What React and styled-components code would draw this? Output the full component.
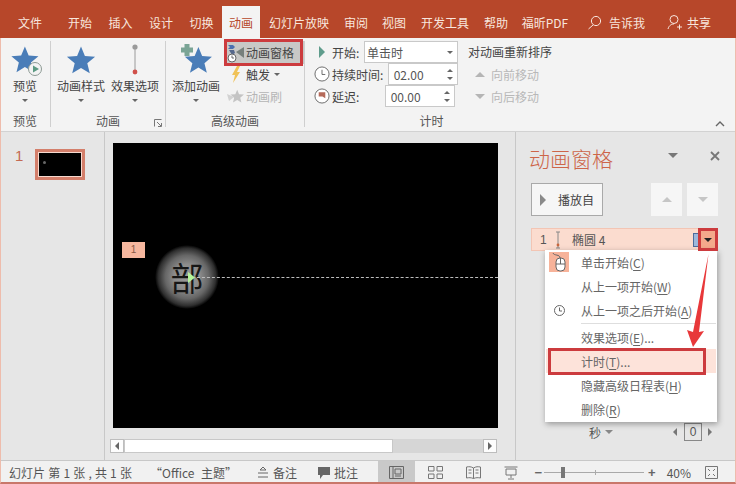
import React from "react";
import styled, { createGlobalStyle } from "styled-components";

const GlobalStyle = createGlobalStyle`
  html, body { margin: 0; padding: 0; background: #e6e6e6; }
  body { font-family: "Noto Sans CJK SC", "Noto Sans", sans-serif; color: #444; }
`;

const Window = styled.div`
  position: relative;
  width: 736px;
  height: 484px;
  overflow: hidden;
  display: flex;
  flex-direction: column;

  &::after {
    content: "";
    position: absolute;
    inset: 38px 0 0 0;
    border-left: 1px solid #eebcac;
    border-right: 1px solid #eebcac;
    border-bottom: 2px solid #c9776a;
    pointer-events: none;
    z-index: 7;
  }
`;

/* title tabs */
const TabBar = styled.div`
  height: 38px;
  flex: none;
  background: #b7472a;
  display: flex;
  align-items: flex-end;
`;
const Tab = styled.div`
  width: ${p => p.w}px;
  height: 32px;
  flex: none;
  box-sizing: border-box;
  padding-left: ${p => p.pl || 0}px;
  display: flex;
  align-items: center;
  justify-content: center;
  gap: ${p => p.gap || 4}px;
  font-size: 12px;
  color: ${p => (p.active ? "#b7472a" : "#f8e6de")};
  background: ${p => (p.active ? "#f3f3f3" : "transparent")};
  white-space: nowrap;
`;

/* ribbon */
const Ribbon = styled.div`
  height: 93px;
  flex: none;
  background: #f3f3f3;
  border-bottom: 1px solid #d2d2d2;
  display: flex;
  position: relative;
`;
const Group = styled.div`
  width: ${p => p.w}px;
  flex: none;
  box-sizing: border-box;
  margin: 3px 0 4px;
  border-right: ${p => (p.last ? "none" : "1px solid #cfcfcf")};
  display: flex;
  flex-direction: column;
  position: relative;
`;
const GroupBody = styled.div`
  flex: 1;
  display: flex;
  min-height: 0;
`;
const GroupLabel = styled.div`
  height: 20px;
  line-height: 28px;
  text-align: center;
  font-size: 12px;
  color: #555;
`;
const BigButton = styled.div`
  width: ${p => p.w}px;
  flex: none;
  display: flex;
  flex-direction: column;
  align-items: center;
  font-size: 12px;
  color: #444;
  white-space: nowrap;
`;
const BigIcon = styled.div`
  height: 36px;
  margin-top: 1px;
  display: flex;
  align-items: center;
  justify-content: center;
`;
const BigText = styled.div`
  line-height: 16px;
`;
const Caret = styled.span`
  display: inline-block;
  width: 0;
  height: 0;
  border-left: ${p => p.s || 3}px solid transparent;
  border-right: ${p => p.s || 3}px solid transparent;
  border-top: ${p => p.s || 3}px solid ${p => p.c || "#666"};
`;
const CaretSlot = styled.div`
  height: 12px;
  display: flex;
  align-items: center;
`;
const Launcher = styled.svg`
  position: absolute;
  right: 3px;
  bottom: 0;
`;
const SmallCol = styled.div`
  width: 78px;
  margin-left: 1px;
  display: flex;
  flex-direction: column;
`;
const SmallButton = styled.div`
  height: ${p => p.h || 22}px;
  display: flex;
  align-items: center;
  gap: 1px;
  font-size: 12px;
  white-space: nowrap;
  color: ${p => (p.dim ? "#b5b5b5" : "#444")};
  background: ${p => (p.on ? "#c8c8c6" : "transparent")};
`;
const IconSlot = styled.span`
  width: ${p => p.w || 18}px;
  flex: none;
  display: flex;
  align-items: center;
  justify-content: center;
`;

/* timing */
const TimingBody = styled.div`
  flex: 1;
  display: flex;
  flex-direction: column;
  padding-left: 8px;
`;
const TimingRow = styled.div`
  height: 23px;
  display: flex;
  align-items: center;
  font-size: 12px;
  color: #444;
  white-space: nowrap;
`;
const TimingLabel = styled.span`
  width: ${p => p.w}px;
  flex: none;
  margin-left: 2px;
`;
const Field = styled.div`
  width: ${p => p.w}px;
  height: 22px;
  box-sizing: border-box;
  background: #fff;
  border: 1px solid #c9c9c9;
  display: flex;
  align-items: center;
  justify-content: space-between;
  padding: 0 4px 0 2px;
  font-size: 12px;
  color: #555;
`;
const Spin = styled.div`
  display: flex;
  flex-direction: column;
  gap: 5px;
`;
const CaretUp = styled(Caret)`
  border-top: none;
  border-bottom: ${p => p.s || 3}px solid ${p => p.c || "#666"};
`;
const ReorderCol = styled.div`
  display: flex;
  flex-direction: column;
  width: 94px;
  flex: none;
`;
const ReorderTitle = styled.div`
  font-size: 12px;
  color: #444;
  height: 24px;
  line-height: 22px;
  padding-left: 4px;
  white-space: nowrap;
`;
const ReorderItem = styled.div`
  height: 22px;
  display: flex;
  align-items: center;
  gap: 6px;
  padding-left: 11px;
  font-size: 12px;
  color: #b8b8b8;
`;
const Collapse = styled.svg`
  position: absolute;
  right: 11px;
  bottom: 4px;
`;

/* main */
const Main = styled.div`
  flex: 1;
  min-height: 0;
  display: flex;
  background: #e6e6e6;
  border-bottom: 1px solid #c8c8c8;
`;
const ThumbPane = styled.div`
  width: 105px;
  flex: none;
  box-sizing: border-box;
  border-right: 1px solid #c8c8c8;
  display: flex;
  align-items: flex-start;
  padding: 17px 0 0 15px;
  gap: 12px;
`;
const ThumbNum = styled.div`
  font-family: "Liberation Sans", sans-serif;
  font-size: 15px;
  line-height: 14px;
  color: #c46a52;
`;
const Thumb = styled.div`
  width: 50px;
  height: 31px;
  box-sizing: border-box;
  background: #000;
  border: 3px solid #d47f6b;
  outline: 1px solid #f6d9cf;
  outline-offset: -4px;
  position: relative;
`;
const ThumbDot = styled.span`
  position: absolute;
  left: 5px;
  top: 9px;
  width: 3px;
  height: 3px;
  border-radius: 50%;
  background: #666;
`;
const Stage = styled.div`
  width: 411px;
  flex: none;
  box-sizing: border-box;
  border-right: 1px solid #c8c8c8;
  padding: 11px 0 0 8px;
  display: flex;
  flex-direction: column;
`;
const Slide = styled.div`
  width: 385px;
  height: 285px;
  background: #000;
  position: relative;
  flex: none;
`;
const Tag = styled.div`
  position: absolute;
  left: 9px;
  top: 99px;
  width: 23px;
  height: 16px;
  background: #f6b79f;
  color: #8a5a48;
  font-family: "Liberation Sans", sans-serif;
  font-size: 10px;
  line-height: 16px;
  text-align: center;
`;
const Glow = styled.div`
  position: absolute;
  left: 42px;
  top: 102px;
  width: 64px;
  height: 64px;
  border-radius: 50%;
  background: radial-gradient(circle closest-side, #9a9a9a 0%, #8c8c8c 40%, #666 68%, #2e2e2e 90%, #000 100%);
  display: flex;
  align-items: center;
  justify-content: center;
  font-size: 33px;
  color: #161616;
`;
const PathLine = styled.div`
  position: absolute;
  left: 84px;
  right: 0;
  top: 134px;
  border-top: 1px dashed #bdbdbd;
`;
const PathHead = styled.svg`
  position: absolute;
  left: 74px;
  top: 128px;
`;
const HScroll = styled.div`
  margin-top: 11px;
  margin-left: -3px;
  width: 387px;
  height: 14px;
  display: flex;
  background: #d6d6d6;
`;
const ScrollBtn = styled.div`
  width: 14px;
  flex: none;
  box-sizing: border-box;
  background: #fdfdfd;
  border: 1px solid #bdbdbd;
  display: flex;
  align-items: center;
  justify-content: center;
`;
const ScrollThumb = styled.div`
  width: 269px;
  flex: none;
  background: #fff;
  border: 1px solid #c8c8c8;
  box-sizing: border-box;
`;
const ScrollTrack = styled.div`
  flex: 1;
`;
const ArrowLeft = styled.span`
  width: 0;
  height: 0;
  border-top: 4px solid transparent;
  border-bottom: 4px solid transparent;
  border-right: 4px solid ${p => p.c || "#666"};
`;
const ArrowRight = styled.span`
  width: 0;
  height: 0;
  border-top: ${p => p.s || 4}px solid transparent;
  border-bottom: ${p => p.s || 4}px solid transparent;
  border-left: ${p => p.s || 4}px solid ${p => p.c || "#666"};
`;

/* animation pane */
const Pane = styled.div`
  flex: 1;
  position: relative;
  padding: 0 18px 0 15px;
  display: flex;
  flex-direction: column;
`;
const PaneHead = styled.div`
  height: 51px;
  display: flex;
  align-items: center;
  margin-left: -2px;
  font-size: 21px;
  color: #cd6549;
`;
const PaneTitle = styled.div`
  flex: 1;
  font-weight: 300;
`;
const PaneTools = styled.div`
  display: flex;
  align-items: center;
  gap: 32px;
  margin: -4px -2px 0 0;
`;
const PlayRow = styled.div`
  display: flex;
  height: 33px;
  align-items: stretch;
`;
const PlayButton = styled.div`
  width: 72px;
  box-sizing: border-box;
  background: #f6f6f6;
  border: 1px solid #a9a9a9;
  display: flex;
  align-items: center;
  gap: 12px;
  padding-left: 8px;
  font-size: 12px;
  color: #444;
`;
const MoveButton = styled.div`
  width: 31px;
  margin-left: ${p => p.ml || 0}px;
  background: #f6f6f6;
  display: flex;
  align-items: center;
  justify-content: center;
`;
const ListRow = styled.div`
  margin-top: 12px;
  height: 23px;
  box-sizing: border-box;
  background: #fbdccf;
  border: 1px solid #f3c5b4;
  display: flex;
  align-items: center;
  font-size: 12px;
  color: #555;
  padding-left: 8px;
  position: relative;
`;
const RowNum = styled.span`
  font-family: "Liberation Sans", sans-serif;
  font-size: 12px;
  width: 15px;
`;
const RowName = styled.span`
  margin-left: 11px;
  flex: 1;
`;
const RowBar = styled.span`
  width: 6px;
  height: 14px;
  box-sizing: border-box;
  background: #9db8dc;
  border: 1px solid #4d6c9c;
`;
const RowDrop = styled.span`
  width: 18px;
  height: 21px;
  background: #f4a98b;
  display: flex;
  align-items: center;
  justify-content: center;
`;
const Menu = styled.div`
  position: absolute;
  left: 29px;
  top: 118px;
  width: 172px;
  height: 172px;
  box-sizing: border-box;
  background: #fff;
  box-shadow: 1px 2px 6px rgba(0, 0, 0, 0.35);
  padding: 0 1px;
  display: flex;
  flex-direction: column;
  z-index: 2;
`;
const MenuItem = styled.div`
  height: 24px;
  flex: none;
  display: flex;
  align-items: center;
  padding-left: 35px;
  position: relative;
  font-size: 12px;
  color: #666;
  white-space: nowrap;
  background: ${p => (p.on ? "#fde3da" : "transparent")};
  u { text-underline-offset: 2px; }
`;
const MenuIcon = styled.span`
  position: absolute;
  left: 3px;
  top: 2px;
  width: 20px;
  height: 20px;
  display: flex;
  align-items: center;
  justify-content: center;
  background: ${p => (p.on ? "#f7b39a" : "transparent")};
`;
const MenuRule = styled.div`
  height: 1px;
  flex: none;
  margin: 1px 0 1px 35px;
  background: #dedede;
`;
const PaneFoot = styled.div`
  position: absolute;
  left: 73px;
  top: 288px;
  width: 150px;
  height: 24px;
  display: flex;
  align-items: center;
  font-size: 12px;
  color: #555;
`;
const FootUnit = styled.div`
  display: flex;
  align-items: center;
  gap: 4px;
  width: 84px;
`;
const ZeroBox = styled.div`
  width: 16px;
  height: 16px;
  margin: 0 6px 0 7px;
  border: 1px solid #888;
  font-family: "Liberation Sans", sans-serif;
  font-size: 12px;
  line-height: 16px;
  text-align: center;
`;

/* status bar */
const StatusBar = styled.div`
  height: 23px;
  flex: none;
  background: #f1f1f1;
  display: flex;
  align-items: center;
  font-size: 12px;
  color: #555;
  white-space: nowrap;
`;
const StatusText = styled.span`
  margin-left: ${p => p.ml}px;
  flex: none;
  display: flex;
  align-items: center;
  gap: ${p => p.gap || 3}px;
  white-space: pre;
  word-spacing: ${p => p.ws || 0}px;
`;
const Views = styled.div`
  margin-left: auto;
  display: flex;
  align-items: center;
  height: 100%;
  padding-right: 18px;
`;
const ViewButton = styled.div`
  width: ${p => p.w}px;
  height: 23px;
  flex: none;
  display: flex;
  align-items: center;
  justify-content: center;
  background: ${p => (p.on ? "#c9c9c9" : "transparent")};
`;
const Zoom = styled.div`
  width: 100px;
  height: 1px;
  margin: 0 4px 0 2px;
  background: #a9a9a9;
  position: relative;
`;
const ZoomThumb = styled.span`
  position: absolute;
  left: 17px;
  top: -5px;
  width: 4px;
  height: 11px;
  background: #777;
`;
const ZoomTick = styled.span`
  position: absolute;
  left: 51px;
  top: -2px;
  width: 1px;
  height: 5px;
  background: #aaa;
`;
const ZoomSign = styled.span`
  font-family: "Liberation Sans", sans-serif;
  font-size: 13px;
  font-weight: 700;
  color: #666;
  margin-left: ${p => p.ml || 0}px;
`;

/* annotations drawn over the screenshot */
const RedBox = styled.div`
  position: absolute;
  left: ${p => p.x}px;
  top: ${p => p.y}px;
  width: ${p => p.w}px;
  height: ${p => p.h}px;
  box-sizing: border-box;
  border: 3px solid #cc3b3e;
  z-index: 5;
`;
const Overlay = styled.svg`
  position: absolute;
  left: 0;
  top: 0;
  z-index: 6;
  pointer-events: none;
`;

const STAR = "M20 2 L25.2 14.6 L38.8 15.6 L28.4 24.4 L31.7 37.7 L20 30.5 L8.3 37.7 L11.6 24.4 L1.2 15.6 L14.8 14.6 Z";

const Star = ({ size = 30, color = "#4a7db8" }) => (
  <svg width={size} height={size} viewBox="0 0 40 40">
    <path d={STAR} fill={color} />
  </svg>
);

const PreviewIcon = () => (
  <svg width="40" height="36" viewBox="0 0 40 36">
    <g transform="translate(5.5 3) scale(.72)">
      <path d={STAR} fill="#4a7db8" />
    </g>
    <circle cx="30" cy="27" r="6.5" fill="#f3f3f3" stroke="#8d9a94" strokeWidth="1" />
    <path d="M28 23.5 L34 27 L28 30.5 Z" fill="#5c9a82" />
  </svg>
);

const EffectIcon = () => (
  <svg width="14" height="36" viewBox="0 0 14 36">
    <circle cx="7" cy="5" r="2.6" fill="#9a9a9a" />
    <line x1="7" y1="7" x2="7" y2="28" stroke="#9a9a9a" />
    <circle cx="7" cy="30" r="2.4" fill="#d0504a" />
  </svg>
);

const AddIcon = () => (
  <svg width="36" height="36" viewBox="0 0 36 36">
    <g transform="translate(6 3.6) scale(.72)">
      <path d={STAR} fill="#4a7db8" />
    </g>
    <path d="M6.5 2 h5 v3.5 h3.5 v5 h-3.5 v3.5 h-5 v-3.5 h-3.5 v-5 h3.5 Z" fill="#7aa495" />
  </svg>
);

const PaneIcon = () => (
  <svg width="18" height="22" viewBox="0 0 18 22">
    <path d="M1 3 h5 l2 2 -2 2 h-5 l2 -2 Z" fill="#4a6fb0" />
    <path d="M17 5 L9 10 L17 16 Z" fill="#77807c" />
    <path d="M2 8 h5 l1 3 -3 2 Z" fill="#55688c" />
    <circle cx="5" cy="16" r="4" fill="#fff" stroke="#666" />
    <path d="M5 13.5 V16 H7" stroke="#666" fill="none" />
  </svg>
);

const BoltIcon = () => (
  <svg width="10" height="17" viewBox="0 0 10 17">
    <path d="M6 0 L1 9 H4 L2 17 L9 6 H6 L9 0 Z" fill="#f0c257" />
  </svg>
);

const BrushIcon = () => (
  <svg width="18" height="15" viewBox="0 0 18 15">
    <g transform="translate(3 0) scale(.36)">
      <path d={STAR} fill="#c4c4c4" />
    </g>
    <path d="M0 5 L7 8 L2 12 Z" fill="#d2d2d2" />
  </svg>
);

const Clock = ({ fill }) => (
  <svg width="16" height="16" viewBox="0 0 17 17">
    <circle cx="8.5" cy="8.5" r="7.5" fill="#fff" stroke="#666" />
    {fill ? (
      <path d="M5 4.5 H12 V11 L9 9 H5 Z" fill="#b56a5a" />
    ) : (
      <path d="M8.5 4 V9 H12" stroke="#666" fill="none" />
    )}
  </svg>
);

const MouseIcon = () => (
  <svg width="16" height="20" viewBox="0 0 16 20">
    <rect x="5" y="6" width="9" height="13" rx="4" fill="#fff" stroke="#666" />
    <path d="M5 12 H14 M9.5 6 V12" stroke="#666" />
    <path d="M9 6 C9 2 3 4 2 1" stroke="#666" fill="none" />
  </svg>
);

const Tabs = [
  ["文件", 60], ["开始", 40], ["插入", 41], ["设计", 40], ["切换", 41]
];
const TabsAfter = [
  ["幻灯片放映", 78], ["审阅", 36], ["视图", 40], ["开发工具", 62], ["帮助", 40], ["福昕PDF", 58]
];

export default function App() {
  return (
    <Window>
      <GlobalStyle />
      <TabBar>
        {Tabs.map(([t, w]) => <Tab key={t} w={w}>{t}</Tab>)}
        <Tab w={38} active>动画</Tab>
        {TabsAfter.map(([t, w]) => <Tab key={t} w={w}>{t}</Tab>)}
        <Tab w={78} gap={7} pl={6}>
          <svg width="15" height="15" viewBox="0 0 15 15">
            <circle cx="9" cy="6" r="4.6" fill="none" stroke="#f8e6de" />
            <path d="M6 10 L1.5 14" stroke="#f8e6de" />
          </svg>
          <span>告诉我</span>
        </Tab>
        <Tab w={74}>
          <svg width="16" height="17" viewBox="0 0 16 17">
            <circle cx="7" cy="5.5" r="4" fill="none" stroke="#f8e6de" />
            <path d="M1 15 C2 11 5 10 7 10 M10 13 H15 M12.5 10.5 V15.5" stroke="#f8e6de" fill="none" />
          </svg>
          <span>共享</span>
        </Tab>
      </TabBar>

      <Ribbon>
        <Group w={51}>
          <GroupBody>
            <BigButton w={50}>
              <BigIcon><PreviewIcon /></BigIcon>
              <BigText>预览</BigText>
              <CaretSlot><Caret /></CaretSlot>
            </BigButton>
          </GroupBody>
          <GroupLabel>预览</GroupLabel>
        </Group>
        <Group w={115}>
          <GroupBody>
            <BigButton w={60}>
              <BigIcon><Star size={30} /></BigIcon>
              <BigText>动画样式</BigText>
              <CaretSlot><Caret /></CaretSlot>
            </BigButton>
            <BigButton w={48}>
              <BigIcon><EffectIcon /></BigIcon>
              <BigText>效果选项</BigText>
              <CaretSlot><Caret /></CaretSlot>
            </BigButton>
          </GroupBody>
          <GroupLabel>动画</GroupLabel>
          <Launcher width="8" height="8" viewBox="0 0 8 8">
            <path d="M.5 7.5 V.5 H7.5 M3 3 L7 7 M4 7.5 H7.5 V4" stroke="#777" fill="none" />
          </Launcher>
        </Group>
        <Group w={139}>
          <GroupBody>
            <BigButton w={60}>
              <BigIcon><AddIcon /></BigIcon>
              <BigText>添加动画</BigText>
              <CaretSlot><Caret /></CaretSlot>
            </BigButton>
            <SmallCol>
              <SmallButton h={24} on><IconSlot><PaneIcon /></IconSlot>动画窗格</SmallButton>
              <SmallButton h={22}>
                <IconSlot><BoltIcon /></IconSlot>触发&nbsp;<Caret />
              </SmallButton>
              <SmallButton h={22} dim><IconSlot><BrushIcon /></IconSlot>动画刷</SmallButton>
            </SmallCol>
          </GroupBody>
          <GroupLabel>高级动画</GroupLabel>
        </Group>
        <Group w={253} last>
          <GroupBody>
            <TimingBody>
              <TimingRow>
                <IconSlot w={17}><ArrowRight s={6} c="#5f9c8c" /></IconSlot>
                <TimingLabel w={32}>开始:</TimingLabel>
                <Field w={94}>单击时 <Caret /></Field>
              </TimingRow>
              <TimingRow>
                <IconSlot w={17}><Clock /></IconSlot>
                <TimingLabel w={56}>持续时间:</TimingLabel>
                <Field w={70}>
                  &nbsp;02.00
                  <Spin><CaretUp /><Caret /></Spin>
                </Field>
              </TimingRow>
              <TimingRow>
                <IconSlot w={17}><Clock fill /></IconSlot>
                <TimingLabel w={53}>延迟:</TimingLabel>
                <Field w={70}>
                  &nbsp;00.00
                  <Spin><CaretUp /><Caret /></Spin>
                </Field>
              </TimingRow>
            </TimingBody>
            <ReorderCol>
              <ReorderTitle>对动画重新排序</ReorderTitle>
              <ReorderItem><CaretUp s={5} c="#b5b5b5" />向前移动</ReorderItem>
              <ReorderItem><Caret s={5} c="#b5b5b5" />向后移动</ReorderItem>
            </ReorderCol>
          </GroupBody>
          <GroupLabel>计时</GroupLabel>
        </Group>
        <Collapse width="10" height="6" viewBox="0 0 10 6">
          <path d="M1 5 L5 1 L9 5" stroke="#666" strokeWidth="1.4" fill="none" />
        </Collapse>
      </Ribbon>

      <Main>
        <ThumbPane>
          <ThumbNum>1</ThumbNum>
          <Thumb><ThumbDot /></Thumb>
        </ThumbPane>
        <Stage>
          <Slide>
            <Tag>1</Tag>
            <Glow>部</Glow>
            <PathLine />
            <PathHead width="9" height="13" viewBox="0 0 9 13">
              <path d="M1 1 L8 6.5 L1 12 Z" fill="#b5f59a" />
            </PathHead>
          </Slide>
          <HScroll>
            <ScrollBtn><ArrowLeft /></ScrollBtn>
            <ScrollThumb />
            <ScrollTrack />
            <ScrollBtn><ArrowRight /></ScrollBtn>
          </HScroll>
        </Stage>
        <Pane>
          <PaneHead>
            <PaneTitle>动画窗格</PaneTitle>
            <PaneTools>
              <Caret s={5} c="#777" />
              <svg width="10" height="10" viewBox="0 0 10 10">
                <path d="M1 1 L9 9 M9 1 L1 9" stroke="#777" strokeWidth="1.8" />
              </svg>
            </PaneTools>
          </PaneHead>
          <PlayRow>
            <PlayButton><ArrowRight s={6} c="#8a8a8a" />播放自</PlayButton>
            <MoveButton ml={48}><CaretUp s={5} c="#c6c6c6" /></MoveButton>
            <MoveButton ml={5}><Caret s={5} c="#c6c6c6" /></MoveButton>
          </PlayRow>
          <ListRow>
            <RowNum>1</RowNum>
            <svg width="6" height="18" viewBox="0 0 6 18">
              <path d="M1 1 H5 M3 1 V17 M1 17 H5" stroke="#888" />
              <circle cx="3" cy="14" r="1.4" fill="#c9663c" />
            </svg>
            <RowName>椭圆 4</RowName>
            <RowBar />
            <RowDrop><Caret s={4} c="#222" /></RowDrop>
          </ListRow>
          <Menu>
            <MenuItem>
              <MenuIcon on><MouseIcon /></MenuIcon>
              单击开始(<u>C</u>)
            </MenuItem>
            <MenuItem>从上一项开始(<u>W</u>)</MenuItem>
            <MenuItem>
              <MenuIcon>
                <svg width="13" height="13" viewBox="0 0 13 13">
                  <circle cx="6.5" cy="6.5" r="5" fill="none" stroke="#666" />
                  <path d="M6.5 3.5 V7 H9" stroke="#666" fill="none" />
                </svg>
              </MenuIcon>
              从上一项之后开始(<u>A</u>)
            </MenuItem>
            <MenuRule />
            <MenuItem>效果选项(<u>E</u>)...</MenuItem>
            <MenuItem on>计时(<u>T</u>)...</MenuItem>
            <MenuItem>隐藏高级日程表(<u>H</u>)</MenuItem>
            <MenuItem>删除(<u>R</u>)</MenuItem>
          </Menu>
          <PaneFoot>
            <FootUnit>秒 <Caret s={4} c="#888" /></FootUnit>
            <ArrowLeft c="#777" />
            <ZeroBox>0</ZeroBox>
            <ArrowRight c="#777" />
          </PaneFoot>
        </Pane>
      </Main>

      <StatusBar>
        <StatusText ml={9} ws={0.5}>幻灯片 第 1 张 , 共 1 张</StatusText>
        <StatusText ml={18} ws={4}>“Office 主题”</StatusText>
        <StatusText ml={20} gap={4}>
          <svg width="12" height="11" viewBox="0 0 12 11">
            <path d="M6 0 L9 3 H3 Z M1 6 H11 M1 10 H11" stroke="#666" fill="none" />
          </svg>
          备注
        </StatusText>
        <StatusText ml={20}>
          <svg width="14" height="14" viewBox="0 0 14 14">
            <path d="M1 1 H13 V9 H6 L3 13 V9 H1 Z" fill="#666" />
          </svg>
          批注
        </StatusText>
        <Views>
          <ViewButton w={37} on>
            <svg width="15" height="13" viewBox="0 0 15 13">
              <path d="M.5 .5 H14.5 V12.5 H.5 Z M4 .5 V12.5 M6 3 H12 V8 H6 Z M6 10 H12" stroke="#666" fill="none" />
            </svg>
          </ViewButton>
          <ViewButton w={40}>
            <svg width="15" height="13" viewBox="0 0 15 13">
              <path d="M.5 .5 H6 V5 H.5 Z M9 .5 H14.5 V5 H9 Z M.5 8 H6 V12.5 H.5 Z M9 8 H14.5 V12.5 H9 Z" stroke="#777" fill="none" />
            </svg>
          </ViewButton>
          <ViewButton w={37}>
            <svg width="15" height="13" viewBox="0 0 15 13">
              <path d="M7.5 2 C5 .5 3 .5 .5 1 V12 C3 11.5 5 11.5 7.5 12.5 C10 11.5 12 11.5 14.5 12 V1 C12 .5 10 .5 7.5 2 Z M7.5 2 V12.5 M2.5 4 H5.5 M2.5 7 H5.5 M9.5 4 H12.5 M9.5 7 H12.5" stroke="#777" fill="none" />
            </svg>
          </ViewButton>
          <ViewButton w={38}>
            <svg width="14" height="14" viewBox="0 0 14 14">
              <path d="M.5 1 H13.5 M2 3 H12 V9 H2 Z M7 9 V12 M4 13 H10" stroke="#777" fill="none" />
            </svg>
          </ViewButton>
          <ZoomSign ml={4}>−</ZoomSign>
          <Zoom><ZoomThumb /><ZoomTick /></Zoom>
          <ZoomSign>+</ZoomSign>
          <StatusText ml={11}>40%</StatusText>
          <StatusText ml={14}>
            <svg width="13" height="13" viewBox="0 0 13 13">
              <path d="M.5 .5 H12.5 V12.5 H.5 Z M3 3 L5 5 M10 3 L8 5 M3 10 L5 8 M10 10 L8 8" stroke="#777" fill="none" />
            </svg>
          </StatusText>
        </Views>
      </StatusBar>

      <RedBox x={224} y={39} w={79} h={27} />
      <RedBox x={698} y={228} w={20} h={23} />
      <RedBox x={548} y={348} w={158} h={27} />
      <Overlay width="736" height="484" viewBox="0 0 736 484">
        <path d="M708.5 254 L699 332 L704 331 L693 347 L687 330 L693 332 Z" fill="#e8383a" />
      </Overlay>
    </Window>
  );
}
